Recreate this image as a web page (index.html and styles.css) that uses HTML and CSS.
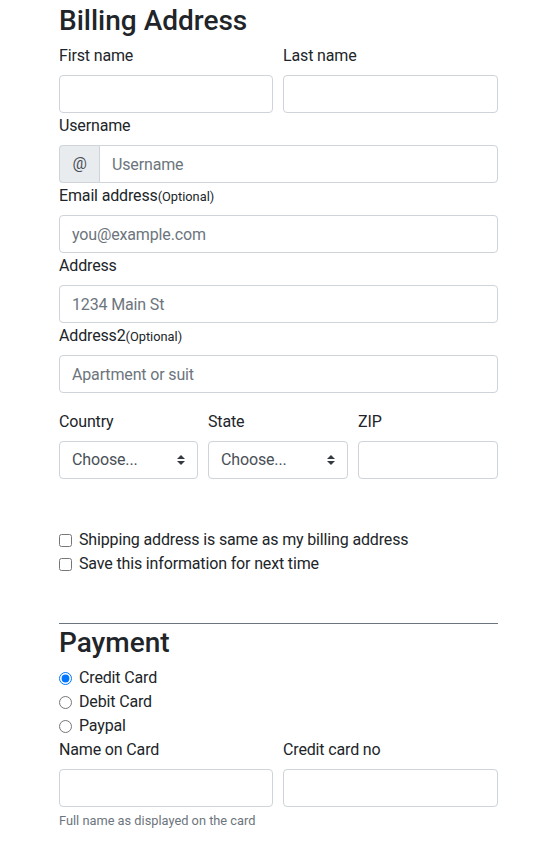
FILE: index.html
```html
<!DOCTYPE html>
<html lang="en">
<head>
<meta charset="utf-8">
<title>Checkout</title>
<link rel="stylesheet" href="styles.css">
</head>
<body>
<main class="page">
  <h3 class="title">Billing Address</h3>

  <div class="row two">
    <div class="field">
      <label class="label" for="fn">First name</label>
      <input class="control" id="fn" type="text">
    </div>
    <div class="field">
      <label class="label" for="ln">Last name</label>
      <input class="control" id="ln" type="text">
    </div>
  </div>

  <div class="field">
    <label class="label" for="un">Username</label>
    <div class="input-group">
      <span class="addon">@</span>
      <input class="control grouped" id="un" type="text" placeholder="Username">
    </div>
  </div>

  <div class="field">
    <label class="label" for="em">Email address<small class="opt">(Optional)</small></label>
    <input class="control" id="em" type="email" placeholder="you@example.com">
  </div>

  <div class="field">
    <label class="label" for="ad">Address</label>
    <input class="control" id="ad" type="text" placeholder="1234 Main St">
  </div>

  <div class="field">
    <label class="label" for="ad2">Address2<small class="opt">(Optional)</small></label>
    <input class="control" id="ad2" type="text" placeholder="Apartment or suit">
  </div>

  <div class="row three">
    <div class="field">
      <label class="label" for="co">Country</label>
      <select class="control select" id="co"><option>Choose...</option></select>
    </div>
    <div class="field">
      <label class="label" for="st">State</label>
      <select class="control select" id="st"><option>Choose...</option></select>
    </div>
    <div class="field">
      <label class="label" for="zip">ZIP</label>
      <input class="control" id="zip" type="text">
    </div>
  </div>

  <div class="checks">
    <label class="check"><input type="checkbox" class="box"><span>Shipping address is same as my billing address</span></label>
    <label class="check"><input type="checkbox" class="box"><span>Save this information for next time</span></label>
  </div>

  <hr class="rule">

  <h3 class="title pay">Payment</h3>

  <div class="radios">
    <label class="check"><input type="radio" name="pm" class="radio" checked><span>Credit Card</span></label>
    <label class="check"><input type="radio" name="pm" class="radio"><span>Debit Card</span></label>
    <label class="check"><input type="radio" name="pm" class="radio"><span>Paypal</span></label>
  </div>

  <div class="row two">
    <div class="field">
      <label class="label" for="noc">Name on Card</label>
      <input class="control" id="noc" type="text">
      <small class="help">Full name as displayed on the card</small>
    </div>
    <div class="field">
      <label class="label" for="ccn">Credit card no</label>
      <input class="control" id="ccn" type="text">
    </div>
  </div>
</main>
</body>
</html>
```
FILE: styles.css
```css
* { box-sizing: border-box; }

html, body {
  margin: 0;
  background: #fff;
}

body {
  font-family: Roboto, "Noto Sans", sans-serif;
  font-size: 16px;
  line-height: 24px;
  color: #212529;
  letter-spacing: -0.15px;
}

.page {
  width: 439px;
  margin-left: 59px;
  display: flex;
  flex-direction: column;
}

.title {
  margin: 4px 0 5px;
  font-size: 28px;
  line-height: 34px;
  font-weight: 500;
  letter-spacing: 0;
}

.title.pay {
  margin: 2px 0 6px;
}

.row {
  display: grid;
  gap: 10px;
}

.row.two { grid-template-columns: 214px 1fr; }
.row.three { grid-template-columns: 139px 140px 1fr; margin-top: 16px; }

.field {
  display: flex;
  flex-direction: column;
  min-width: 0;
}

.label {
  display: block;
  height: 24px;
  padding-top: 1px;
  margin-bottom: 8px;
  white-space: nowrap;
}

.opt {
  font-size: 12.8px;
  line-height: 0;
  letter-spacing: 0;
}

.control {
  display: block;
  width: 100%;
  height: 38px;
  padding: 6px 12px;
  font-family: inherit;
  font-size: 16px;
  letter-spacing: -0.15px;
  line-height: 24px;
  color: #495057;
  background: #fff;
  border: 1px solid #ced4da;
  border-radius: 4px;
  outline: none;
}

.control::placeholder {
  color: #6c757d;
  opacity: 1;
}

.select {
  appearance: none;
  -webkit-appearance: none;
  padding-right: 28px;
  color: #495057;
  background: #fff url("data:image/svg+xml,%3csvg xmlns='http://www.w3.org/2000/svg' width='4' height='5' viewBox='0 0 4 5'%3e%3cpath fill='%23343a40' d='M2 0L0 2h4zm0 5L0 3h4z'/%3e%3c/svg%3e") no-repeat right 12px center / 8px 10px;
}

.input-group {
  display: flex;
}

.addon {
  display: flex;
  align-items: center;
  justify-content: center;
  width: 40px;
  height: 38px;
  flex: none;
  color: #495057;
  background: #e9ecef;
  border: 1px solid #ced4da;
  border-right: 0;
  border-radius: 4px 0 0 4px;
}

.grouped {
  flex: 1;
  border-radius: 0 4px 4px 0;
}

.checks {
  margin-top: 49px;
  display: flex;
  flex-direction: column;
}

.check {
  display: flex;
  align-items: center;
  height: 24px;
}

.box, .radio {
  width: 13px;
  height: 13px;
  margin: 0 7px 0 0;
  flex: none;
}

.rule {
  margin: 47px 0 0;
  border: 0;
  border-top: 1px solid #6c757d;
  height: 0;
}

.radios {
  display: flex;
  flex-direction: column;
  margin-bottom: -1px;
}

.help {
  margin-top: 4px;
  font-size: 12.8px;
  line-height: 19px;
  color: #6c757d;
  letter-spacing: 0;
}
```
